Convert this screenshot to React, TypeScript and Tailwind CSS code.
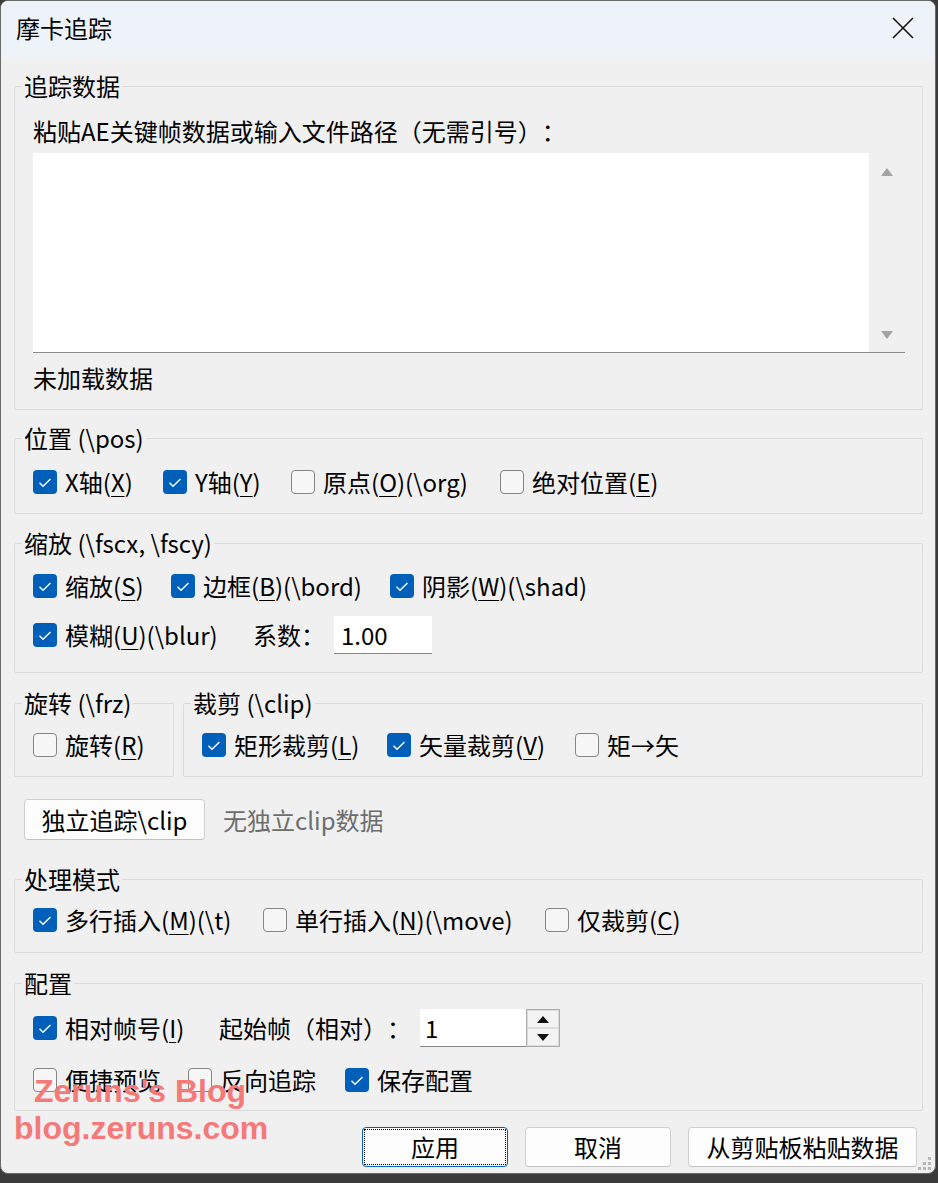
import React from 'react';

const FONT = { fontFamily: '"Noto Sans CJK SC", "Noto Sans", sans-serif' };

function Check({ checked }: { checked?: boolean }) {
  if (checked) {
    return (
      <span className="flex h-6 w-6 shrink-0 items-center justify-center rounded-[4px] bg-[#005fb8]">
        <svg width="24" height="24" viewBox="0 0 24 24">
          <path d="M6.5 12.8 L10 16.3 L17.5 9" fill="none" stroke="#fff" strokeWidth="1.4" />
        </svg>
      </span>
    );
  }
  return <span className="h-6 w-6 shrink-0 rounded-[4px] border-[1.5px] border-[#858585] bg-[#f6f6f6]" />;
}

// label with an underlined access key, e.g. X轴(X)
function Label({ pre, k, post }: { pre: string; k?: string; post?: string }) {
  return (
    <span className="whitespace-nowrap">
      {pre}
      {k && <span className="underline decoration-1 underline-offset-[4px]">{k}</span>}
      {post}
    </span>
  );
}

function Box({
  checked,
  w,
  children,
}: {
  checked?: boolean;
  w?: string;
  children: React.ReactNode;
}) {
  return (
    <div className={`flex h-7 shrink-0 items-center gap-2 ${w ?? ''}`}>
      <Check checked={checked} />
      {children}
    </div>
  );
}

function Group({
  label,
  className,
  children,
}: {
  label: string;
  className?: string;
  children: React.ReactNode;
}) {
  return (
    <fieldset className={`min-w-0 rounded-[2px] border border-[#dadada] px-[7px] ${className ?? ''}`}>
      <legend className="px-[2px] leading-[28px]">{label}</legend>
      <div className="pl-[11px]">{children}</div>
    </fieldset>
  );
}

function Button({
  children,
  w,
  focused,
}: {
  children: React.ReactNode;
  w: string;
  focused?: boolean;
}) {
  return (
    <div
      className={`flex h-10 items-center justify-center rounded-[4px] border bg-[#fdfdfd] ${w} ${
        focused ? 'border-[#005fb8] p-[1px]' : 'border-[#d0d0d0] border-b-[#c2c2c2]'
      }`}
    >
      {focused ? (
        <div className="flex h-full w-full items-center justify-center border border-dotted border-black">
          {children}
        </div>
      ) : (
        children
      )}
    </div>
  );
}

export default function App() {
  return (
    <div
      className="h-[1183px] w-[938px] overflow-hidden bg-[#3b3b3b] text-[24px] text-black [text-spacing-trim:space-all]"
      style={FONT}
    >
      <div className="relative h-[1174px] w-[936px] overflow-hidden rounded-[8px] border border-[#6a6a6a] bg-[#f0f0f0]">
        {/* title bar */}
        <div className="flex h-[57px] items-center justify-between bg-[#eef3f9] pb-[3px] pl-[15px] pr-[21px]">
          <span className="leading-[28px]">摩卡追踪</span>
          <svg width="22" height="22" viewBox="0 0 22 22">
            <path d="M1 1 L21 21 M21 1 L1 21" stroke="#111" strokeWidth="1.6" />
          </svg>
        </div>

        <div className="flex flex-col pl-[13px] pr-[12px]">
          <Group label="追踪数据" className="mt-[14px] pb-[17px]">
            <div className="mt-[17px] leading-[28px]">粘贴AE关键帧数据或输入文件路径（无需引号）：</div>
            <div className="mr-[10px] mt-[8px] flex h-[200px] border-b border-[#8c8c8c] bg-white">
              <div className="flex-1" />
              <div className="flex w-[36px] flex-col items-center justify-between bg-[#f0f0f0] pb-[13px] pt-[15px]">
                <svg width="12" height="8" viewBox="0 0 12 8">
                  <path d="M6 0 L12 8 L0 8 Z" fill="#a3a3a3" />
                </svg>
                <svg width="12" height="8" viewBox="0 0 12 8">
                  <path d="M0 0 L12 0 L6 8 Z" fill="#a3a3a3" />
                </svg>
              </div>
            </div>
            <div className="mt-[11px] leading-[28px]">未加载数据</div>
          </Group>

          <Group label="位置 (\pos)" className="mt-[14px] pb-[17px]">
            <div className="mt-[16px] flex">
              <Box checked w="w-[130px]">
                <Label pre="X轴(" k="X" post=")" />
              </Box>
              <Box checked w="w-[128px]">
                <Label pre="Y轴(" k="Y" post=")" />
              </Box>
              <Box w="w-[209px]">
                <Label pre="原点(" k="O" post=")(\org)" />
              </Box>
              <Box>
                <Label pre="绝对位置(" k="E" post=")" />
              </Box>
            </div>
          </Group>

          <Group label="缩放 (\fscx, \fscy)" className="mt-[15px] pb-[18px]">
            <div className="mt-[15px] flex">
              <Box checked w="w-[138px]">
                <Label pre="缩放(" k="S" post=")" />
              </Box>
              <Box checked w="w-[219px]">
                <Label pre="边框(" k="B" post=")(\bord)" />
              </Box>
              <Box checked>
                <Label pre="阴影(" k="W" post=")(\shad)" />
              </Box>
            </div>
            <div className="mt-[16px] flex h-[38px] items-center">
              <Box checked w="w-[220px]">
                <Label pre="模糊(" k="U" post=")(\blur)" />
              </Box>
              <span className="w-[81px]">系数：</span>
              <div className="flex h-[38px] w-[98px] items-center border-b border-[#858585] bg-white pl-[7px]">
                1.00
              </div>
            </div>
          </Group>

          <div className="mt-[16px] flex gap-[9px]">
            <Group label="旋转 (\frz)" className="w-[160px] shrink-0 pb-[17px]">
              <div className="mt-[14px] flex">
                <Box>
                  <Label pre="旋转(" k="R" post=")" />
                </Box>
              </div>
            </Group>
            <Group label="裁剪 (\clip)" className="flex-1 pb-[17px]">
              <div className="mt-[14px] flex">
                <Box checked w="w-[185px]">
                  <Label pre="矩形裁剪(" k="L" post=")" />
                </Box>
                <Box checked w="w-[188px]">
                  <Label pre="矢量裁剪(" k="V" post=")" />
                </Box>
                <Box>
                  <span>矩→矢</span>
                </Box>
              </div>
            </Group>
          </div>

          <div className="mt-[22px] flex items-center pl-[10px]">
            <div className="flex h-[41px] w-[181px] items-center justify-center rounded-[4px] border border-[#d0d0d0] border-b-[#c2c2c2] bg-[#fdfdfd]">
              独立追踪\clip
            </div>
            <span className="ml-[18px] text-[#6d6d6d]">无独立clip数据</span>
          </div>

          <Group label="处理模式" className="mt-[25px] pb-[18px]">
            <div className="mt-[13px] flex">
              <Box checked w="w-[230px]">
                <Label pre="多行插入(" k="M" post=")(\t)" />
              </Box>
              <Box w="w-[282px]">
                <Label pre="单行插入(" k="N" post=")(\move)" />
              </Box>
              <Box>
                <Label pre="仅裁剪(" k="C" post=")" />
              </Box>
            </div>
          </Group>

          <Group label="配置" className="mt-[16px] pb-[16px]">
            <div className="mt-[12px] flex h-[38px] items-center">
              <Box checked w="w-[186px]">
                <Label pre="相对帧号(" k="I" post=")" />
              </Box>
              <span className="w-[201px]">起始帧（相对）：</span>
              <div className="flex h-[38px] w-[140px]">
                <div className="flex flex-1 items-center border-b border-[#858585] bg-white pl-[5px]">1</div>
                <div className="flex w-[34px] flex-col border border-[#acacac] bg-[#f0f0f0]">
                  <div className="flex flex-1 items-center justify-center border border-[#dcdcdc] bg-[#f3f3f3]">
                    <svg width="12" height="7" viewBox="0 0 12 7">
                      <path d="M6 0 L12 7 L0 7 Z" fill="#111" />
                    </svg>
                  </div>
                  <div className="flex flex-1 items-center justify-center border border-[#dcdcdc] bg-[#f3f3f3]">
                    <svg width="12" height="7" viewBox="0 0 12 7">
                      <path d="M0 0 L12 0 L6 7 Z" fill="#111" />
                    </svg>
                  </div>
                </div>
              </div>
            </div>
            <div className="mt-[19px] flex">
              <Box w="w-[155px]">
                <span>便捷预览</span>
              </Box>
              <Box w="w-[157px]">
                <span>反向追踪</span>
              </Box>
              <Box checked>
                <span>保存配置</span>
              </Box>
            </div>
          </Group>

          <div className="mt-[16px] flex justify-end gap-[17px] pr-[6px]">
            <Button w="w-[146px]" focused>
              应用
            </Button>
            <Button w="w-[146px]">取消</Button>
            <Button w="w-[229px]">从剪贴板粘贴数据</Button>
          </div>
        </div>

        {/* watermark */}
        <div
          className="pointer-events-none absolute left-[13px] top-[1072px] text-[32px] font-bold leading-[37px] text-[#f47a7a]"
          style={{ fontFamily: '"Liberation Sans", Arial, sans-serif' }}
        >
          <div className="pl-[20px]">Zeruns's Blog</div>
          <div>blog.zeruns.com</div>
        </div>

        {/* resize grip */}
        <svg className="absolute bottom-[2px] right-[3px]" width="14" height="14" viewBox="0 0 14 14">
          <g fill="#b8b8b8">
            <rect x="10" y="0" width="3" height="3" />
            <rect x="5" y="5" width="3" height="3" />
            <rect x="10" y="5" width="3" height="3" />
            <rect x="0" y="10" width="3" height="3" />
            <rect x="5" y="10" width="3" height="3" />
            <rect x="10" y="10" width="3" height="3" />
          </g>
        </svg>
      </div>
    </div>
  );
}
